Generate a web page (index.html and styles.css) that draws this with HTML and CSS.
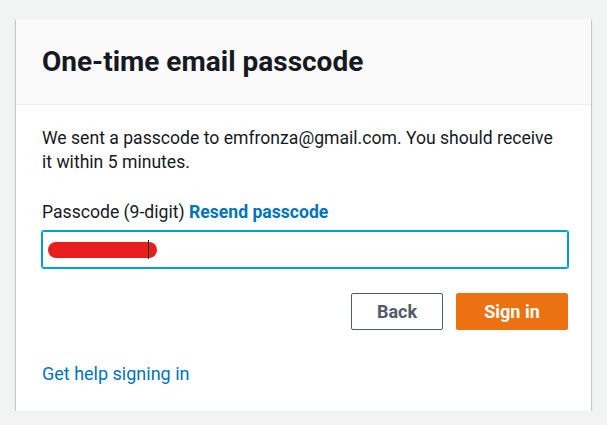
FILE: index.html
```html
<!DOCTYPE html>
<html>
<head>
<meta charset="utf-8">
<link rel="stylesheet" href="styles.css">
</head>
<body>
<div class="card">
  <div class="card-header">
    <h1 class="title">One-time email passcode</h1>
  </div>
  <div class="card-body">
    <p class="message">We sent a passcode to emfronza@gmail.com. You should receive it within 5 minutes.</p>
    <div class="label-row">
      <span class="label">Passcode (9-digit)</span>
      <a class="resend" href="#">Resend passcode</a>
    </div>
    <div class="input">
      <span class="redact"></span><span class="caret"></span>
    </div>
    <div class="actions">
      <button class="btn btn-back">Back</button>
      <button class="btn btn-primary">Sign in</button>
    </div>
    <a class="help" href="#">Get help signing in</a>
  </div>
</div>
</body>
</html>
```
FILE: styles.css
```css
html, body {
  margin: 0;
  padding: 0;
  background: #f2f3f3;
  font-family: Roboto, "Liberation Sans", sans-serif;
  color: #16191f;
}
body {
  padding: 19px 16px 0 16px;
}
.card {
  width: 575px;
  background: #fff;
  box-shadow: 0 1px 1px 0 rgba(0, 28, 36, 0.3), 1px 1px 1px 0 rgba(0, 28, 36, 0.15), -1px 1px 1px 0 rgba(0, 28, 36, 0.15);
}
.card-header {
  background: #fafafa;
  border-bottom: 1px solid #eaeded;
  height: 85px;
  padding: 0 26px;
  display: flex;
  align-items: center;
}
.title {
  margin: 0;
  font-size: 28px;
  font-weight: 700;
  color: #16191f;
}
.card-body {
  padding: 21px 24px 25px 26px;
}
.message {
  margin: 0;
  font-size: 17.6px;
  line-height: 24px;
  width: 515px;
}
.label-row {
  margin-top: 26px;
  font-size: 17.6px;
  line-height: 24px;
}
.resend {
  color: #0073bb;
  font-weight: 700;
  text-decoration: none;
}
.input {
  margin-top: 7px;
  width: 526px;
  height: 37px;
  box-sizing: border-box;
  border: 1px solid #00a1c9;
  box-shadow: 0 0 0 1px #00a1c9;
  border-radius: 2px;
  display: flex;
  align-items: center;
  padding-left: 5px;
  position: relative;
}
.redact {
  display: block;
  width: 109px;
  height: 16px;
  background: #e81e1e;
  border-radius: 8px;
}
.caret {
  position: absolute;
  left: 105px;
  top: 8px;
  width: 1px;
  height: 19px;
  background: #16191f;
}
.actions {
  margin-top: 25px;
  display: flex;
  justify-content: flex-end;
  gap: 13px;
  width: 526px;
}
.btn {
  height: 37px;
  border-radius: 2px;
  font-family: inherit;
  font-size: 18px;
  font-weight: 700;
  cursor: pointer;
  padding: 0;
}
.btn-back {
  width: 92px;
  background: #fff;
  border: 1px solid #545b64;
  color: #545b64;
}
.btn-primary {
  width: 112px;
  background: #ec7211;
  border: 1px solid #ec7211;
  color: #fff;
}
.help {
  display: block;
  margin-top: 32px;
  font-size: 18px;
  line-height: 24px;
  color: #0073bb;
  text-decoration: none;
  width: max-content;
}
```
